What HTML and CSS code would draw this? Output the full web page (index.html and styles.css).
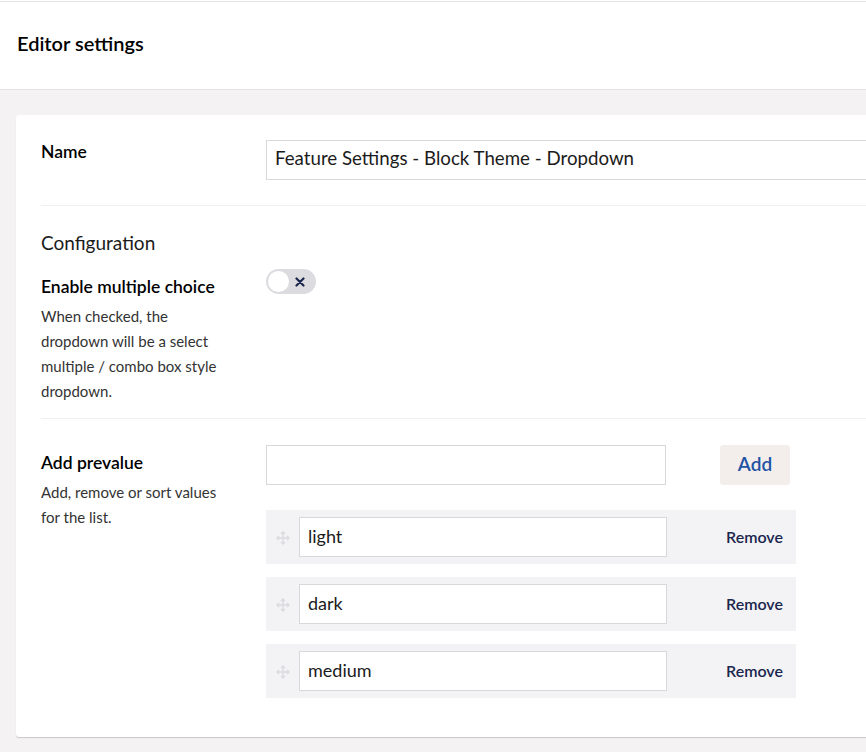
FILE: index.html
```html
<!DOCTYPE html>
<html>
<head>
<meta charset="utf-8">
<link rel="stylesheet" href="styles.css">
</head>
<body>
<div class="page">
  <header class="header">
    <h1 class="title">Editor settings</h1>
  </header>
  <main class="main">
    <section class="card">
      <div class="prop prop-name">
        <div class="label-col">
          <div class="label">Name</div>
        </div>
        <div class="editor-col">
          <input class="text-input name-input" type="text" value="Feature Settings - Block Theme - Dropdown">
        </div>
      </div>

      <h2 class="group-title">Configuration</h2>

      <div class="prop prop-toggle">
        <div class="label-col">
          <div class="label">Enable multiple choice</div>
          <div class="desc">When checked, the dropdown will be a select multiple / combo box style dropdown.</div>
        </div>
        <div class="editor-col">
          <div class="toggle">
            <span class="knob"></span>
            <svg class="toggle-x" width="10" height="10" viewBox="0 0 10 10"><path d="M1.5 1.5 L8.5 8.5 M8.5 1.5 L1.5 8.5" stroke="#1b264f" stroke-width="2.2" stroke-linecap="round"/></svg>
          </div>
        </div>
      </div>

      <div class="prop prop-prevalues">
        <div class="label-col">
          <div class="label">Add prevalue</div>
          <div class="desc">Add, remove or sort values for the list.</div>
        </div>
        <div class="editor-col">
          <div class="add-row">
            <input class="text-input add-input" type="text" value="">
            <button class="add-btn">Add</button>
          </div>
          <div class="values">
            <div class="value-row">
              <svg class="drag" width="14" height="14" viewBox="0 0 14 14"><path d="M7 1 L7 13 M1 7 L13 7 M5 3 L7 1 L9 3 M5 11 L7 13 L9 11 M3 5 L1 7 L3 9 M11 5 L13 7 L11 9" stroke="#dcdcdf" stroke-width="1.5" fill="none"/></svg>
              <input class="text-input value-input" type="text" value="light">
              <button class="remove">Remove</button>
            </div>
            <div class="value-row">
              <svg class="drag" width="14" height="14" viewBox="0 0 14 14"><path d="M7 1 L7 13 M1 7 L13 7 M5 3 L7 1 L9 3 M5 11 L7 13 L9 11 M3 5 L1 7 L3 9 M11 5 L13 7 L11 9" stroke="#dcdcdf" stroke-width="1.5" fill="none"/></svg>
              <input class="text-input value-input" type="text" value="dark">
              <button class="remove">Remove</button>
            </div>
            <div class="value-row">
              <svg class="drag" width="14" height="14" viewBox="0 0 14 14"><path d="M7 1 L7 13 M1 7 L13 7 M5 3 L7 1 L9 3 M5 11 L7 13 L9 11 M3 5 L1 7 L3 9 M11 5 L13 7 L11 9" stroke="#dcdcdf" stroke-width="1.5" fill="none"/></svg>
              <input class="text-input value-input" type="text" value="medium">
              <button class="remove">Remove</button>
            </div>
          </div>
        </div>
      </div>
    </section>
  </main>
</div>
</body>
</html>
```

FILE: styles.css
```css
* { box-sizing: border-box; }
html, body {
  margin: 0;
  padding: 0;
  height: 100%;
}
body {
  font-family: Lato, "Open Sans", sans-serif;
  color: #1b1b1b;
  background: #f3f1f1;
  overflow: hidden;
}
.page {
  width: 866px;
  height: 752px;
  overflow: hidden;
  padding-top: 1px;
  background: #fff;
  display: flex;
  flex-direction: column;
}
.header {
  height: 89px;
  border-top: 1px solid #e3e3e3;
  border-bottom: 1px solid #e3e3e3;
  background: #fff;
  display: flex;
  align-items: center;
  padding-left: 17px;
  padding-bottom: 5px;
  flex-shrink: 0;
}
.title {
  margin: 0;
  font-size: 20px;
  font-weight: 600;
  color: #000;
}
.main {
  flex: 1;
  background: #f4f2f2;
  padding: 25px 0 0 16px;
}
.card {
  width: 1000px;
  background: #fff;
  border-radius: 3px;
  box-shadow: 0 1px 1px rgba(0,0,0,0.18);
  padding: 25px 0 39px 25px;
}
.prop {
  display: grid;
  grid-template-columns: 225px 1fr;
  border-bottom: 1px solid #f0f0f0;
}
.prop-name { padding-bottom: 25px; }
.prop-toggle { padding-bottom: 14px; }
.prop-prevalues { border-bottom: none; padding-top: 26px; }

.label {
  font-size: 17.5px;
  font-weight: 600;
  line-height: 22px;
  color: #000;
}
.prop-name .label { padding-top: 1px; }
.prop-toggle .label { padding-top: 7px; }
.prop-prevalues .label { padding-top: 7px; }
.desc {
  font-size: 15px;
  line-height: 25px;
  color: #333;
  width: 195px;
  margin-top: 6px;
}
.group-title {
  margin: 26px 0 0;
  font-size: 19px;
  font-weight: 400;
  line-height: 22px;
  color: #1b1b1b;
  padding-bottom: 15px;
}

.text-input {
  height: 40px;
  border: 1px solid #d8d7d9;
  border-radius: 0;
  background: #fff;
  font-family: Lato, "Open Sans", sans-serif;
  font-size: 18px;
  color: #1b1b1b;
  padding: 0 8px;
  outline: none;
}
.name-input { width: 700px; font-size: 18.7px; padding-bottom: 4px; }

.toggle {
  width: 50px;
  height: 25px;
  border-radius: 13px;
  background: #dcdbdf;
  position: relative;
}
.knob {
  position: absolute;
  left: 2px;
  top: 2px;
  width: 21px;
  height: 21px;
  border-radius: 50%;
  background: #fff;
}
.toggle-x {
  position: absolute;
  left: 29px;
  top: 8px;
}

.add-row {
  display: flex;
  align-items: center;
}
.add-input { width: 400px; }
.add-btn {
  margin-left: 54px;
  width: 70px;
  height: 40px;
  border: none;
  border-radius: 3px;
  background: #f3eeec;
  color: #2152a3;
  font-family: Lato, "Open Sans", sans-serif;
  font-size: 19px;
  font-weight: 600;
  padding: 0 0 4px;
}
.values {
  margin-top: 25px;
  width: 530px;
  display: flex;
  flex-direction: column;
  gap: 13px;
}
.value-row {
  height: 54px;
  background: #f3f3f5;
  display: flex;
  align-items: center;
  padding: 0 13px 0 10px;
}
.drag {
  flex-shrink: 0;
  margin-right: 9px;
  margin-top: 1px;
}
.value-input {
  width: 368px;
  font-size: 18px;
  padding-bottom: 3px;
}
.remove {
  margin-left: auto;
  border: none;
  background: transparent;
  font-family: Lato, "Open Sans", sans-serif;
  font-size: 16px;
  font-weight: 600;
  color: #1b264f;
  padding: 0 0 2px;
}
```
